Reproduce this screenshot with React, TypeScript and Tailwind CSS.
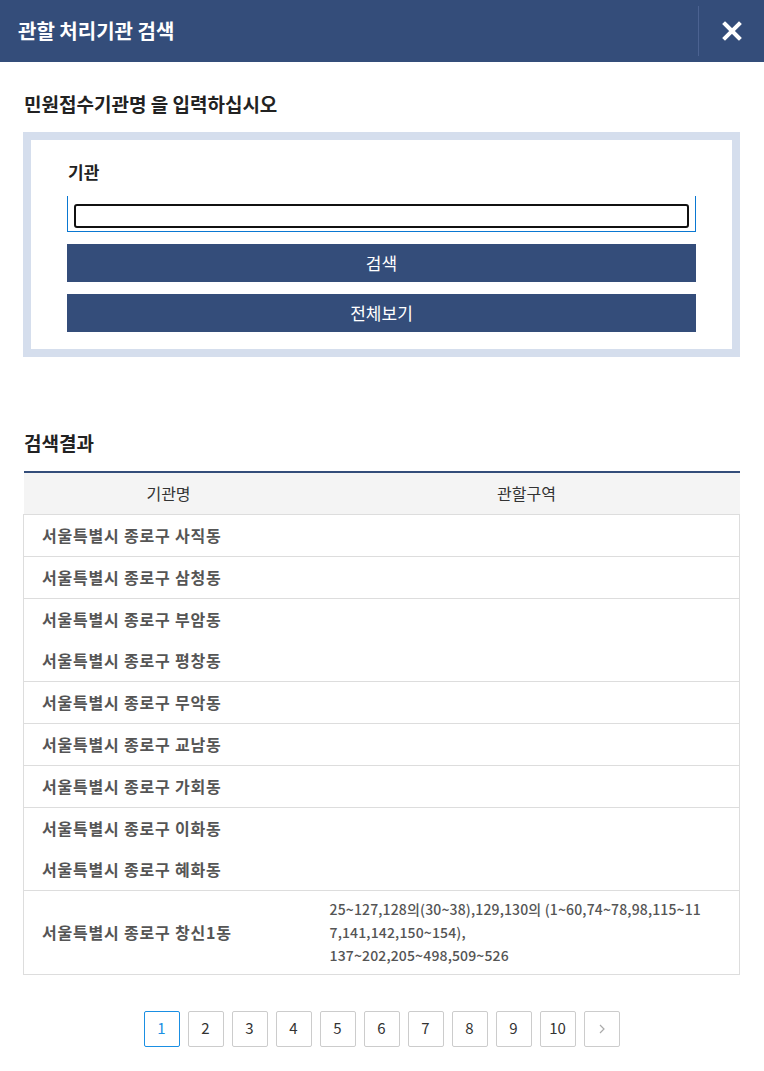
import React from 'react';

const font = { fontFamily: '"Noto Sans CJK KR", "Noto Sans", sans-serif' };

interface Row {
  names: string[];
  area?: string[];
}

const rows: Row[] = [
  { names: ['서울특별시 종로구 사직동'] },
  { names: ['서울특별시 종로구 삼청동'] },
  { names: ['서울특별시 종로구 부암동', '서울특별시 종로구 평창동'] },
  { names: ['서울특별시 종로구 무악동'] },
  { names: ['서울특별시 종로구 교남동'] },
  { names: ['서울특별시 종로구 가회동'] },
  { names: ['서울특별시 종로구 이화동', '서울특별시 종로구 혜화동'] },
  {
    names: ['서울특별시 종로구 창신1동'],
    area: [
      '25~127,128의(30~38),129,130의 (1~60,74~78,98,115~11',
      '7,141,142,150~154),',
      '137~202,205~498,509~526',
    ],
  },
];

export default function App() {
  return (
    <div className="w-[764px] min-h-[1071px] bg-white" style={font}>
      {/* Header */}
      <div className="h-[62px] bg-[#344d7a] flex items-center justify-between">
        <h1 className="pl-[18px] text-white text-[20px] font-bold">관할 처리기관 검색</h1>
        <div className="h-[50px] w-[66px] border-l border-[#4b6291] flex items-center justify-center">
          <svg width="20" height="20" viewBox="0 0 20 20">
            <path d="M3 3L17 17M17 3L3 17" stroke="white" strokeWidth="4" strokeLinecap="square" />
          </svg>
        </div>
      </div>

      <div className="px-[23px] pr-[24px]">
        <h2 className="mt-[30px] pl-[1px] text-[19px] font-bold text-[#222] leading-[24px]">
          민원접수기관명 을 입력하십시오
        </h2>

        {/* Search box */}
        <div className="mt-[16px] border-[8px] border-[#d5deed] px-[36px] pt-[21px] pb-[17px]">
          <label className="block pl-[1px] text-[17px] font-bold text-[#222] leading-[22px]">기관</label>
          <div className="mt-[13px] border-x border-b border-[#0a78d2] px-[6px] pt-[8px] pb-[3px]">
            <input
              type="text"
              className="block w-full h-[24px] border-2 border-[#111] rounded-[3px] bg-white outline-none"
            />
          </div>
          <button className="mt-[12px] w-full h-[38px] bg-[#344d7a] text-white text-[17px]">검색</button>
          <button className="mt-[12px] w-full h-[38px] bg-[#344d7a] text-white text-[17px]">전체보기</button>
        </div>

        <h2 className="mt-[74px] pl-[1px] text-[19px] font-bold text-[#222] leading-[24px]">
          검색결과
        </h2>

        {/* Results table */}
        <table className="mt-[16px] w-full border-collapse border-t-2 border-t-[#344d7a]">
          <thead>
            <tr className="bg-[#f4f4f4] h-[42px]">
              <th className="w-[290px] text-[16px] font-normal text-[#333]">기관명</th>
              <th className="text-[16px] font-normal text-[#333]">관할구역</th>
            </tr>
          </thead>
          <tbody>
            {rows.map((row, i) => (
              <tr key={i} className="border border-[#dddddd]">
                <td className="pl-[18px] align-middle">
                  {row.names.map((n) => (
                    <div
                      key={n}
                      className="h-[41px] flex items-center text-[16px] tracking-[0.8px] font-semibold text-[#555]"
                    >
                      {n}
                    </div>
                  ))}
                </td>
                <td className="pl-[16px] pr-[10px] py-[7px] align-middle">
                  {row.area &&
                    row.area.map((a) => (
                      <div key={a} className="text-[14px] leading-[23px] tracking-[0.15px] font-medium text-[#555]">
                        {a}
                      </div>
                    ))}
                </td>
              </tr>
            ))}
          </tbody>
        </table>

        {/* Pagination */}
        <div className="mt-[36px] flex justify-center gap-[8px]">
          {[1, 2, 3, 4, 5, 6, 7, 8, 9, 10].map((p) => (
            <button
              key={p}
              className={
                p === 1
                  ? 'w-[36px] h-[36px] rounded-[2px] border border-[#1a8fe3] text-[#1a8fe3] text-[15px]'
                  : 'w-[36px] h-[36px] rounded-[2px] border border-[#cccccc] text-[#333] text-[15px]'
              }
            >
              {p}
            </button>
          ))}
          <button className="w-[36px] h-[36px] rounded-[2px] border border-[#cccccc] flex items-center justify-center">
            <svg width="8" height="10" viewBox="0 0 8 10">
              <path d="M2 1L6 5L2 9" stroke="#aaaaaa" strokeWidth="1.2" fill="none" />
            </svg>
          </button>
        </div>
      </div>
    </div>
  );
}
